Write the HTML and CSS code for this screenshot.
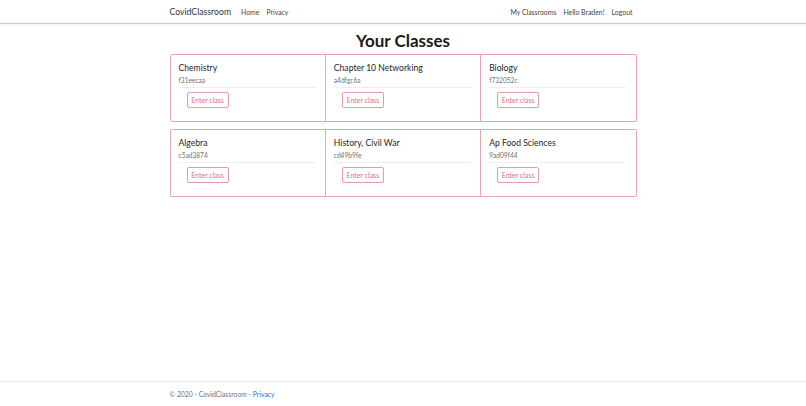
FILE: index.html
```html
<!DOCTYPE html>
<html lang="en">
<head>
<meta charset="utf-8">
<title>Your Classes - CovidClassroom</title>
<link rel="stylesheet" href="styles.css">
</head>
<body>
<header class="topbar">
  <nav class="container nav">
    <div class="nav-left">
      <a class="brand" href="#">CovidClassroom</a>
      <a class="nav-link" href="#">Home</a>
      <a class="nav-link" href="#">Privacy</a>
    </div>
    <div class="nav-right">
      <a class="nav-link" href="#">My Classrooms</a>
      <a class="nav-link" href="#">Hello Braden!</a>
      <a class="nav-link" href="#">Logout</a>
    </div>
  </nav>
</header>
<main class="container main">
  <h1 class="title">Your Classes</h1>
  <div class="card-group">
    <div class="card"><div class="card-name">Chemistry</div><div class="card-code">f31eecaa</div><hr class="sep"><div class="actions"><a class="btn" href="#">Enter class</a></div></div>
    <div class="card"><div class="card-name">Chapter 10 Networking</div><div class="card-code">a4dfgc6a</div><hr class="sep"><div class="actions"><a class="btn" href="#">Enter class</a></div></div>
    <div class="card"><div class="card-name">Biology</div><div class="card-code">f732052c</div><hr class="sep"><div class="actions"><a class="btn" href="#">Enter class</a></div></div>
  </div>
  <div class="card-group">
    <div class="card"><div class="card-name">Algebra</div><div class="card-code">c5ad3874</div><hr class="sep"><div class="actions"><a class="btn" href="#">Enter class</a></div></div>
    <div class="card"><div class="card-name">History, Civil War</div><div class="card-code">cd49b9fe</div><hr class="sep"><div class="actions"><a class="btn" href="#">Enter class</a></div></div>
    <div class="card"><div class="card-name">Ap Food Sciences</div><div class="card-code">9ad09f44</div><hr class="sep"><div class="actions"><a class="btn" href="#">Enter class</a></div></div>
  </div>
</main>
<footer class="footer">
  <div class="container footer-text">© 2020 - CovidClassroom - <a class="footer-link" href="#">Privacy</a></div>
</footer>
</body>
</html>
```
FILE: styles.css
```css
html, body {
  margin: 0;
  padding: 0;
}
body {
  font-family: "Lato", "Noto Sans", sans-serif;
  color: #212529;
  background: #fff;
  min-height: 406px;
  display: flex;
  flex-direction: column;
}
a { text-decoration: none; }
.container {
  width: 467px;
  margin: 0 auto;
}
.topbar {
  height: 23px;
  border-bottom: 1px solid #e6bcc5;
  box-shadow: 0 1px 2px rgba(200, 120, 140, 0.15);
}
.nav {
  height: 23px;
  display: flex;
  align-items: center;
  justify-content: space-between;
}
.nav-left, .nav-right {
  display: flex;
  align-items: center;
  gap: 7px;
}
.brand {
  font-size: 8.7px;
  color: #333;
  margin-right: 3px;
}
.nav-link {
  font-size: 6.9px;
  color: #444;
}
.nav-right { margin-right: 4px; }
.main {
  flex: 1;
}
.title {
  margin: 5px 0 1px;
  text-align: center;
  font-size: 17px;
  font-weight: 700;
  line-height: 24px;
  color: #1a1a1a;
}
.card-group {
  display: flex;
  box-sizing: border-box;
  border: 1px solid #e7a6b3;
  border-radius: 2px;
  margin-bottom: 7px;
  height: 68px;
}
.card {
  flex: 1;
  padding: 7px 9px 0 8px;
  border-right: 1px solid #e7a6b3;
}
.card:last-child { border-right: none; }
.card-name {
  font-size: 8.6px;
  line-height: 12px;
  color: #1e1e1e;
}
.card-code {
  font-size: 6.6px;
  line-height: 10px;
  margin-top: 1px;
  color: #6f6f6f;
}
.sep {
  border: 0;
  border-top: 1px solid #eee;
  margin: 2px 0 4px;
}
.actions {
  display: flex;
  padding-left: 8px;
}
.btn {
  display: block;
  width: 42px;
  box-sizing: border-box;
  text-align: center;
  font-size: 7px;
  line-height: 14px;
  color: #e0707f;
  border: 1px solid #e59aa8;
  border-radius: 2px;
}
.footer {
  border-top: 1px solid #e6e6e6;
  height: 24px;
  margin-top: auto;
}
.footer-text {
  font-size: 6.8px;
  line-height: 24px;
  color: #6c757d;
}
.footer-link { color: #1a6fd1; }
```
